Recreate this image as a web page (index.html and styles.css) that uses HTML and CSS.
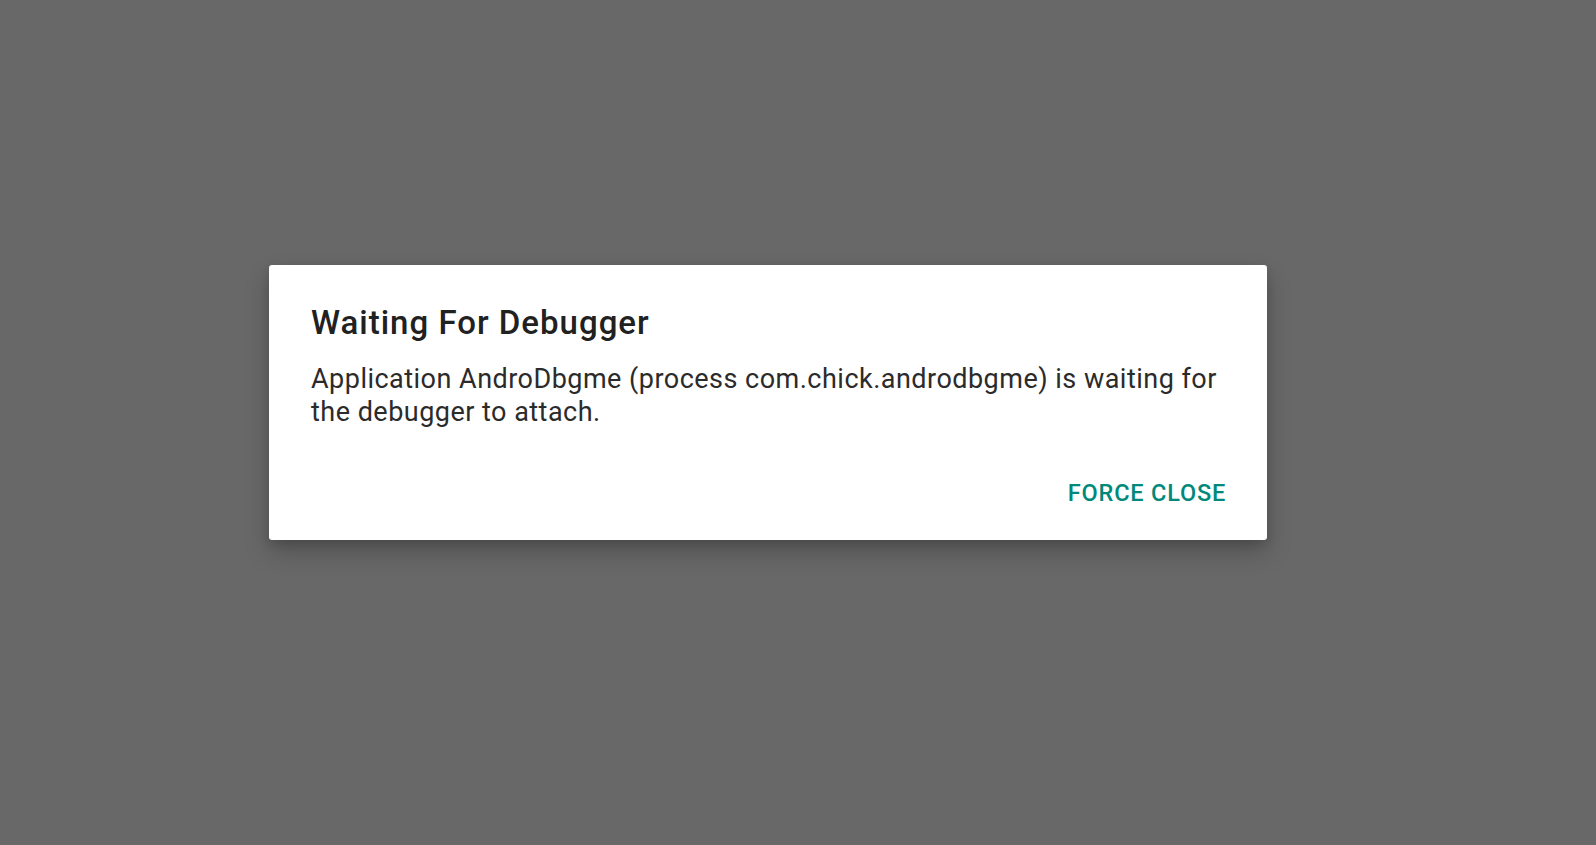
FILE: index.html
```html
<!DOCTYPE html>
<html>
<head>
<meta charset="utf-8">
<link rel="stylesheet" href="styles.css">
</head>
<body>
<div class="screen">
  <div class="dialog">
    <div class="title">Waiting For Debugger</div>
    <div class="message">Application AndroDbgme (process com.chick.androdbgme) is waiting for the debugger to attach.</div>
    <div class="actions">
      <span class="button">FORCE CLOSE</span>
    </div>
  </div>
</div>
</body>
</html>
```
FILE: styles.css
```css
html, body {
  margin: 0;
  padding: 0;
  height: 100%;
}
body {
  background: #686868;
  font-family: Roboto, "Noto Sans", sans-serif;
}
.screen {
  padding: 265px 0 0 269px;
}
.dialog {
  width: 998px;
  height: 275px;
  box-sizing: border-box;
  background: #ffffff;
  border-radius: 3px;
  padding: 40px 42px 0 42px;
  box-shadow: 0 12px 24px rgba(0, 0, 0, 0.22), 0 4px 10px rgba(0, 0, 0, 0.12);
  display: flex;
  flex-direction: column;
}
.title {
  font-size: 33px;
  line-height: 36px;
  font-weight: 500;
  letter-spacing: 1px;
  color: #212121;
}
.message {
  margin-top: 22px;
  font-size: 27px;
  line-height: 33px;
  letter-spacing: 0.48px;
  color: #2b2b2b;
}
.actions {
  margin-top: 50px;
  display: flex;
  justify-content: flex-end;
}
.button {
  font-size: 23.5px;
  line-height: 28px;
  font-weight: 500;
  letter-spacing: 0.8px;
  margin-right: -1px;
  color: #00897b;
}
```
